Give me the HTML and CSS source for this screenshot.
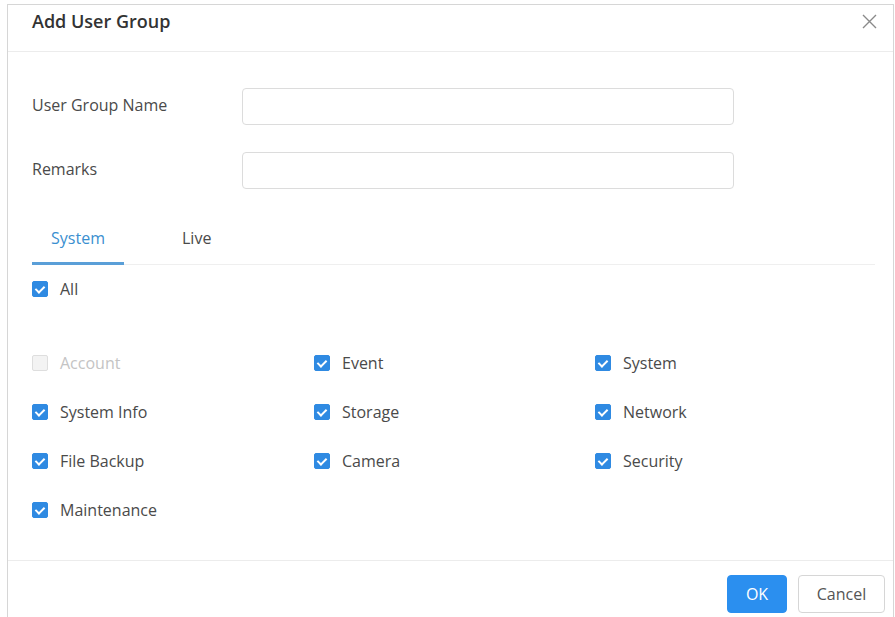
FILE: index.html
```html
<!DOCTYPE html>
<html lang="en">
<head>
  <meta charset="UTF-8" />
  <meta name="viewport" content="width=device-width, initial-scale=1.0" />
  <title>Add User Group</title>
  <link rel="stylesheet" href="styles.css">
</head>
<body>

  <div class="dialog">
    <div class="dialog-head">
      <h2>Add User Group</h2>
      <button class="close" aria-label="Close">
        <svg width="15" height="15" viewBox="0 0 15 15"><path d="M1 1L14 14M14 1L1 14" stroke="#8a8a8a" stroke-width="1.4" fill="none"/></svg>
      </button>
    </div>

    <div class="dialog-body">
      <div class="field">
        <label>User Group Name</label>
        <input type="text" />
      </div>
      <div class="field">
        <label>Remarks</label>
        <input type="text" />
      </div>

      <div class="tabs">
        <span class="tab active">System</span>
        <span class="tab">Live</span>
      </div>

      <label class="check all"><span class="box on"></span>All</label>

      <div class="perm-grid">
        <label class="check disabled"><span class="box"></span>Account</label>
        <label class="check"><span class="box on"></span>Event</label>
        <label class="check"><span class="box on"></span>System</label>
        <label class="check"><span class="box on"></span>System Info</label>
        <label class="check"><span class="box on"></span>Storage</label>
        <label class="check"><span class="box on"></span>Network</label>
        <label class="check"><span class="box on"></span>File Backup</label>
        <label class="check"><span class="box on"></span>Camera</label>
        <label class="check"><span class="box on"></span>Security</label>
        <label class="check"><span class="box on"></span>Maintenance</label>
      </div>
    </div>

    <div class="dialog-foot">
      <button class="btn primary">OK</button>
      <button class="btn">Cancel</button>
    </div>
  </div>

</body>
</html>
```

FILE: styles.css
```css
body { margin: 0; background: #fff; font-family: "Open Sans", "Noto Sans", sans-serif; color: #4a4a4a; }

.dialog { margin: 4px 1px 0 7px; border: 1px solid #d6d6d6; border-bottom: none; background: #fff; height: 640px; display: flex; flex-direction: column; }

.dialog-head { height: 46px; border-bottom: 1px solid #ececec; display: flex; align-items: center; justify-content: space-between; padding: 0 16px 0 24px; }
.dialog-head h2 { margin: 0; font-size: 18px; font-weight: 600; color: #333; margin-top: -15px; }
.close { background: none; border: none; padding: 0; margin-top: -10px; cursor: pointer; }

.dialog-body { padding: 36px 18px 0 24px; height: 509px; box-sizing: border-box; border-bottom: 1px solid #ececec; }

.field { display: flex; align-items: center; margin-bottom: 27px; }
.field label { width: 210px; font-size: 16px; color: #4a4a4a; padding-bottom: 4px; }
.field input { width: 492px; height: 37px; box-sizing: border-box; border: 1px solid #dcdcdc; border-radius: 4px; outline: none; }

.tabs { display: flex; border-bottom: 1px solid #efefef; margin-top: 38px; }
.tab { font-size: 16px; padding: 0 0 13px; width: 92px; text-align: center; color: #4a4a4a; }
.tab + .tab { width: auto; margin-left: 58px; }
.tab.active { color: #3a8fd0; border-bottom: 3px solid #5a9fd8; margin-bottom: -1px; }

.check { display: flex; align-items: center; gap: 12px; font-size: 16px; color: #4a4a4a; }
.check.all { margin-top: 13px; }
.check.disabled { color: #c4c4c4; }

.box { width: 16px; height: 16px; box-sizing: border-box; border-radius: 2px; border: 1px solid #dedede; background: #f3f3f3; position: relative; flex: none; }
.box.on { background: #2f8ae2; border-color: #2f8ae2; }
.box.on::after { content: ""; position: absolute; left: 4px; top: 2px; width: 4px; height: 7px; border: solid #fff; border-width: 0 2px 2px 0; transform: rotate(45deg); }

.perm-grid { display: grid; grid-template-columns: 282px 281px 1fr; row-gap: 27px; margin-top: 52px; }
.perm-grid .check { height: 22px; }

.dialog-foot { display: flex; justify-content: flex-end; gap: 11px; padding: 14px 8px 0 0; }
.btn { height: 38px; min-width: 60px; padding: 0 15px; font-family: inherit; font-size: 16px; border: 1px solid #d6d6d6; background: #fff; color: #555; border-radius: 4px; cursor: pointer; }
.btn.primary { background: #2b8fef; border-color: #2b8fef; color: #fff; }
.btn + .btn { min-width: 87px; }
```
